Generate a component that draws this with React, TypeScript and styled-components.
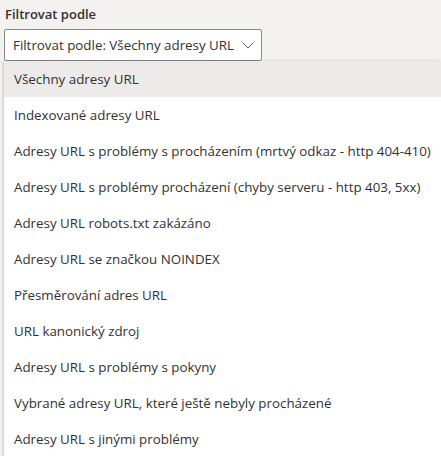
import React from "react";
import styled, { createGlobalStyle } from "styled-components";

const GlobalStyle = createGlobalStyle`
  html, body {
    margin: 0;
    padding: 0;
    background: #f3f2f1;
    overflow: hidden;
  }
  body {
    font-family: "Open Sans", "Noto Sans", "Liberation Sans", sans-serif;
    -webkit-font-smoothing: antialiased;
  }
`;

const Page = styled.div`
  padding: 4px 0 0 4px;
  color: #323130;
`;

const Label = styled.div`
  font-size: 13px;
  font-weight: 600;
  line-height: 20px;
  height: 25px;
  padding-left: 1px;
`;

const Select = styled.button`
  all: unset;
  box-sizing: border-box;
  display: flex;
  align-items: center;
  justify-content: space-between;
  width: 258px;
  height: 32px;
  padding: 0 7px 0 8px;
  background: #ffffff;
  border: 1px solid #8a8886;
  border-radius: 2px;
  font-size: 13.35px;
  color: #323130;
  white-space: nowrap;
`;

const Chevron = styled.svg`
  width: 12px;
  height: 12px;
  flex: none;
  color: #605e5c;
`;

const Menu = styled.ul`
  list-style: none;
  margin: 0;
  padding: 0;
  background: #ffffff;
  box-shadow: -1px 0 2px rgba(0, 0, 0, 0.13), 0 1px 4px rgba(0, 0, 0, 0.1);
`;

const Option = styled.li<{ $selected?: boolean }>`
  height: 36px;
  display: flex;
  align-items: center;
  padding-left: 10px;
  font-size: 13.35px;
  color: #323130;
  white-space: nowrap;
  background: ${({ $selected }) => ($selected ? "#edebe9" : "#ffffff")};
`;

const options = [
  "Všechny adresy URL",
  "Indexované adresy URL",
  "Adresy URL s problémy s procházením (mrtvý odkaz - http 404-410)",
  "Adresy URL s problémy procházení (chyby serveru - http 403, 5xx)",
  "Adresy URL robots.txt zakázáno",
  "Adresy URL se značkou NOINDEX",
  "Přesměrování adres URL",
  "URL kanonický zdroj",
  "Adresy URL s problémy s pokyny",
  "Vybrané adresy URL, které ještě nebyly procházené",
  "Adresy URL s jinými problémy",
];

export default function App() {
  return (
    <>
      <GlobalStyle />
      <Page>
        <Label>Filtrovat podle</Label>
        <Select>
          <span>Filtrovat podle: {options[0]}</span>
          <Chevron viewBox="0 0 12 12" fill="none">
            <path d="M0.5 3.5 L6 9 L11.5 3.5" stroke="currentColor" strokeWidth="1" />
          </Chevron>
        </Select>
        <Menu>
          {options.map((o, i) => (
            <Option key={o} $selected={i === 0}>
              {o}
            </Option>
          ))}
        </Menu>
      </Page>
    </>
  );
}
